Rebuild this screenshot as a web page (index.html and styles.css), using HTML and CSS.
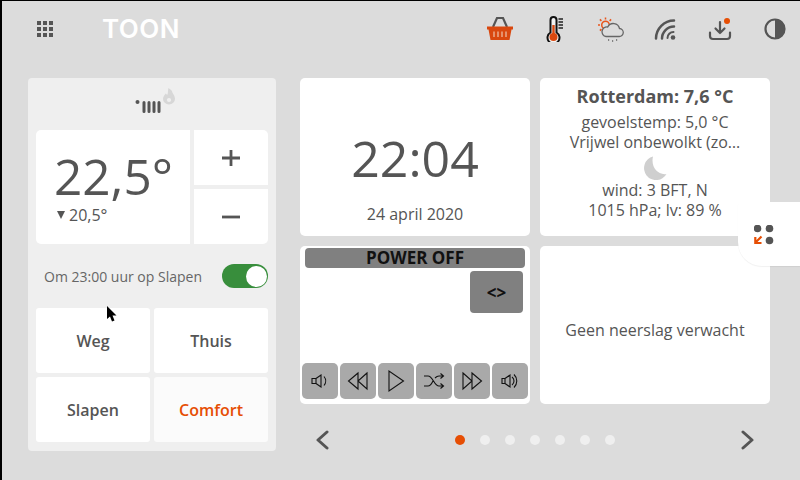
FILE: index.html
```html
<!DOCTYPE html>
<html lang="nl">
<head>
<meta charset="utf-8">
<title>Toon</title>
<link rel="stylesheet" href="styles.css">
</head>
<body>
<div class="screen">
  <header class="topbar">
    <svg class="apps" width="16" height="16" viewBox="0 0 16 16" fill="#555">
      <rect x="0" y="0" width="4" height="4"/><rect x="6" y="0" width="4" height="4"/><rect x="12" y="0" width="4" height="4"/>
      <rect x="0" y="6" width="4" height="4"/><rect x="6" y="6" width="4" height="4"/><rect x="12" y="6" width="4" height="4"/>
      <rect x="0" y="12" width="4" height="4"/><rect x="6" y="12" width="4" height="4"/><rect x="12" y="12" width="4" height="4"/>
    </svg>
    <div class="logo">TOON</div>
    <nav class="status">
      <span class="slot"><svg width="28" height="26" viewBox="0 0 28 26">
        <path d="M7 11 11 2H17L21 11" fill="none" stroke="#555" stroke-width="2.200"/>
        <path d="M1 10.500H27V13.500H25.500L23.500 24H4.500L2.500 13.500H1Z" fill="#d9480f"/>
        <path d="M8 15.500V21M12 15.500V21M16 15.500V21M20 15.500V21" stroke="#e9a98c" stroke-width="1.500"/>
      </svg></span>
      <span class="slot"><svg width="18" height="26" viewBox="0 0 18 26">
        <path d="M4.500 16.500V4a3 3 0 0 1 6 0V16.500a6 6 0 1 1-6 0Z" fill="#f2f2f2" stroke="#111" stroke-width="2"/>
        <circle cx="7.500" cy="21" r="4" fill="#d9480f"/><rect x="6.300" y="9" width="2.400" height="10" fill="#d9480f"/>
        <path d="M12.500 3H17M12.500 6H17M12.500 9H17M12.500 12H17" stroke="#222" stroke-width="1.600"/>
      </svg></span>
      <span class="slot"><svg width="28" height="26" viewBox="0 0 28 26" fill="none">
        <circle cx="9.500" cy="9" r="3.800" stroke="#e8551c" stroke-width="1.500"/>
        <path d="M9.500 1.500V3.500M2 9H4M3.900 3.400 5.400 4.900M15.100 3.400 13.600 4.900M3.900 14.600 5.400 13.100" stroke="#e8551c" stroke-width="1.500"/>
        <path d="M10 20.500H23a4 4 0 0 0 .5-8 6.300 6.300 0 0 0-11.800-1.500A4.800 4.800 0 0 0 10 20.500Z" fill="#dcdcdc" stroke="#666" stroke-width="1.300"/>
        <path d="M12 24h1.200M16 25h1.200M20 24h1.200" stroke="#666" stroke-width="1.300"/>
      </svg></span>
      <span class="slot"><svg width="22" height="22" viewBox="0 0 22 22" fill="none" stroke="#555" stroke-width="2.500" stroke-linecap="round">
        <path d="M2 20.500A18 18 0 0 1 20 2.500"/><path d="M8 20.500A12 12 0 0 1 20 8.500"/>
        <path d="M13.500 20A6 6 0 0 1 19.500 14" stroke-width="2"/>
        <circle cx="19" cy="19.500" r="2.300" fill="#555" stroke="none"/>
      </svg></span>
      <span class="slot"><svg width="24" height="24" viewBox="0 0 24 24" fill="none" stroke="#555" stroke-width="2.200" stroke-linecap="round" stroke-linejoin="round">
        <path d="M2 15.500V19a3 3 0 0 0 3 3H19a3 3 0 0 0 3-3V15.500"/><path d="M12 5V16M7.500 11.500 12 16 16.500 11.500"/>
        <circle cx="19" cy="4" r="3" fill="#e64e04" stroke="none"/>
      </svg></span>
      <span class="slot"><svg width="22" height="22" viewBox="0 0 22 22">
        <circle cx="11" cy="11" r="9.500" fill="none" stroke="#555" stroke-width="2.200"/>
        <path d="M11 1A10 10 0 0 1 11 21Z" fill="#555"/>
      </svg></span>
    </nav>
  </header>

  <main class="content">
    <section class="thermostat">
      <div class="burner">
        <svg width="42" height="30" viewBox="0 0 42 30">
          <circle cx="4.500" cy="16" r="2" fill="#555"/>
          <path d="M11 16.500V25.500M16 16.500V25.500M21 16.500V25.500M26 16.500V25.500" stroke="#555" stroke-width="3" stroke-linecap="round"/>
          <g transform="translate(-1.800,-5.200) scale(1.200,1.100)">
            <path d="M34 9.500C34.500 12 36.500 13 36.500 16.500A5 5 0 0 1 26.500 16.500C26.500 14 28 12.800 28.800 11.500L30 13C31 10.500 30.500 8.500 31 6.500 32 7.500 33.500 8 34 9.500Z" fill="#d7d7d7"/>
            <circle cx="31.500" cy="17.500" r="1.800" fill="#efefef"/>
          </g>
        </svg>
      </div>
      <div class="setpoint">
        <div class="temp-card">
          <div class="temp-main">22,5°</div>
          <div class="temp-sub"><span class="arrow"></span>20,5°</div>
        </div>
        <div class="steppers">
          <div class="stepper"><svg width="18" height="18" viewBox="0 0 18 18"><path d="M0 9H18M9 1V17" stroke="#555" stroke-width="2.800"/></svg></div>
          <div class="stepper"><svg width="18" height="18" viewBox="0 0 18 18"><path d="M0 9H18" stroke="#555" stroke-width="2.800"/></svg></div>
        </div>
      </div>
      <div class="schedule">
        <span class="schedule-text">Om 23:00 uur op Slapen</span>
        <span class="toggle"><span class="knob"></span></span>
      </div>
      <div class="modes">
        <div class="mode">Weg</div>
        <div class="mode">Thuis</div>
        <div class="mode">Slapen</div>
        <div class="mode active">Comfort</div>
      </div>
    </section>

    <section class="dashboard">
      <div class="tiles">
        <div class="tile clock">
          <div class="time">22:04</div>
          <div class="date">24 april 2020</div>
        </div>
        <div class="tile weather">
          <div class="city">Rotterdam: 7,6 °C</div>
          <div>gevoelstemp: 5,0 °C</div>
          <div>Vrijwel onbewolkt (zo…</div>
          <svg class="moon" width="24" height="24" viewBox="0 0 24 24"><path d="M10 .5A12 12 0 1 0 23.500 18C15 19.500 7.500 11 10 .5Z" fill="#cfcfcf"/></svg>
          <div>wind: 3 BFT, N</div>
          <div>1015 hPa; lv: 89 %</div>
        </div>
        <div class="tile media">
          <div class="power">POWER OFF</div>
          <div class="media-mid"><div class="swap">&lt;&gt;</div></div>
          <div class="transport">
            <div class="tbtn"><svg width="18" height="14" viewBox="0 0 18 14"><path d="M1 4.500H5V9.500H1ZM5 4.500 10 1V13L5 9.500M13 2.500A7 7 0 0 1 13 11.500"/></svg></div>
            <div class="tbtn"><svg width="22" height="20" viewBox="0 0 22 20"><path d="M11 2 1.500 10 11 18ZM20 2 11 10 20 18Z"/></svg></div>
            <div class="tbtn"><svg width="18" height="24" viewBox="0 0 18 24"><path d="M2 2V22L16.500 12Z"/></svg></div>
            <div class="tbtn"><svg width="22" height="16" viewBox="0 0 22 16"><path d="M1 3H5C10 3 11 13 16 13H20M1 13H5C7.500 13 8.800 10.500 10 8M12 5C13 4 14.500 3 16 3H20M17.500 .5 20.500 3 17.500 5.500M17.500 10.500 20.500 13 17.500 15.500"/></svg></div>
            <div class="tbtn"><svg width="22" height="20" viewBox="0 0 22 20"><path d="M2 2 11 10 2 18ZM11 2 20.500 10 11 18Z"/></svg></div>
            <div class="tbtn"><svg width="18" height="16" viewBox="0 0 18 16"><path d="M1 5.500H4V10.500H1ZM4 5.500 9 2V14L4 10.500M11 4A5 5 0 0 1 11 12M13 1.500A9 9 0 0 1 13 14.500"/></svg></div>
          </div>
        </div>
        <div class="tile rain">Geen neerslag verwacht</div>
      </div>
      <div class="pager">
        <svg width="14" height="20" viewBox="0 0 14 20"><path d="M12 2 3 10 12 18" fill="none" stroke="#555" stroke-width="3" stroke-linecap="round" stroke-linejoin="round"/></svg>
        <div class="dots">
          <span class="dot on"></span><span class="dot"></span><span class="dot"></span><span class="dot"></span><span class="dot"></span><span class="dot"></span><span class="dot"></span>
        </div>
        <svg width="14" height="20" viewBox="0 0 14 20"><path d="M2 2 11 10 2 18" fill="none" stroke="#555" stroke-width="3" stroke-linecap="round" stroke-linejoin="round"/></svg>
      </div>
    </section>
  </main>

  <aside class="sidetab">
    <svg width="24" height="24" viewBox="0 0 24 24">
      <circle cx="3.500" cy="3.500" r="3.800" fill="#555"/><circle cx="15.500" cy="3.500" r="3.800" fill="#555"/><circle cx="15.500" cy="15.500" r="3.800" fill="#555"/>
      <path d="M7.500 11.500 1.500 17.500M1.300 12V18H7.500" fill="none" stroke="#e64e04" stroke-width="2.200"/>
    </svg>
  </aside>

  <svg class="cursor" width="11" height="17" viewBox="0 0 11 17"><path d="M0 0V13L3 10.500 5 15.500 7.500 14.500 5.500 9.500H9.500Z" fill="#000"/></svg>
</div>
</body>
</html>
```
FILE: styles.css
```css
* { box-sizing: border-box; }
html, body { margin: 0; padding: 0; }
body { width: 800px; height: 480px; overflow: hidden; background: #000; font-family: "Open Sans", sans-serif; color: #555; }
.screen { position: relative; width: 800px; height: 480px; background: #dcdcdc; border-left: 2px solid #000; border-top: 1px solid #000; overflow: hidden; }

.topbar { display: flex; align-items: center; height: 57px; padding-left: 35px; padding-bottom: 1px; }
.logo { margin-left: 49px; margin-top: -1px; font-family: Inter, sans-serif; font-weight: 600; font-size: 26px; line-height: 1; letter-spacing: 0.5px; color: #fff; }
.status { display: flex; gap: 15px; margin-left: auto; margin-right: 5px; }
.slot { display: flex; align-items: center; justify-content: center; width: 40px; height: 28px; }

.content { display: flex; gap: 24px; padding: 20px 0 0 26px; }

.thermostat { width: 248px; height: 373px; padding: 0 8px; background: #efefef; border-radius: 4px; }
.burner { display: flex; justify-content: center; height: 52px; padding: 8px 0 0 4px; }
.setpoint { display: flex; gap: 4px; height: 114px; }
.temp-card { width: 154px; padding: 17px 0 0 18px; background: #fff; border-radius: 5px 0 0 5px; }
.temp-main { font-size: 49.500px; line-height: 58px; }
.temp-sub { display: flex; align-items: center; font-size: 16px; line-height: 20px; margin-left: 3px; }
.arrow { width: 0; height: 0; margin-right: 4px; border-left: 4.500px solid transparent; border-right: 4.500px solid transparent; border-top: 8px solid #555; }
.steppers { display: flex; flex-direction: column; gap: 4px; width: 74px; }
.stepper { display: flex; align-items: center; justify-content: center; flex: 1; background: #fff; }
.stepper:first-child { border-top-right-radius: 5px; }
.stepper:last-child { border-bottom-right-radius: 5px; }

.schedule { display: flex; align-items: center; justify-content: space-between; height: 64px; padding-left: 8px; }
.schedule-text { font-size: 14px; color: #666; }
.toggle { display: flex; align-items: center; justify-content: flex-end; width: 46px; height: 24px; padding-right: 1px; border-radius: 12px; background: #388e3c; }
.knob { width: 21px; height: 21px; border-radius: 50%; background: #fff; }

.modes { display: grid; grid-template-columns: 114px 114px; grid-template-rows: 65px 65px; gap: 4px; }
.mode { display: flex; align-items: center; justify-content: center; background: #fff; border-radius: 3px; font-size: 16px; font-weight: 600; }
.mode.active { background: #fbfbfb; color: #e64e04; }

.tiles { display: grid; grid-template-columns: 230px 230px; grid-template-rows: 158px 158px; gap: 10px; }
.tile { background: #fff; border-radius: 5px; }
.clock { display: flex; flex-direction: column; align-items: center; padding-top: 42px; }
.time { font-size: 50px; line-height: 76px; }
.date { margin-top: 8px; font-size: 16px; line-height: 20px; }
.weather { display: flex; flex-direction: column; align-items: center; padding-top: 7px; font-size: 16px; line-height: 20px; }
.city { margin-bottom: 4px; font-size: 18px; font-weight: 700; line-height: 23px; }
.moon { display: block; margin-top: 4px; }

.media { display: flex; flex-direction: column; padding: 2px 2px 5px; }
.power { margin: 0 3px; height: 20px; background: #808080; border-radius: 4px; color: #111; font-size: 17px; font-weight: 700; line-height: 20px; text-align: center; }
.media-mid { flex: 1; display: flex; justify-content: flex-end; padding: 3px 5px 0 0; }
.swap { display: flex; align-items: center; justify-content: center; width: 53px; height: 42px; background: #808080; border-radius: 4px; color: #111; font-size: 17px; font-weight: 700; }
.transport { display: flex; gap: 2px; }
.tbtn { display: flex; align-items: center; justify-content: center; width: 36px; height: 36px; background: #a9a9a9; border-radius: 5px; }
.tbtn svg { fill: none; stroke: #111; stroke-width: 1.100; }

.rain { display: flex; align-items: center; justify-content: center; padding-top: 10px; font-size: 16px; }

.pager { display: flex; align-items: center; justify-content: space-between; height: 44px; margin-top: 14px; padding: 0 15px; }
.dots { display: flex; gap: 15px; }
.dot { width: 10px; height: 10px; border-radius: 50%; background: #efefef; }
.dot.on { background: #e64e04; }

.sidetab { position: absolute; top: 201px; right: 0; display: flex; width: 62px; height: 64px; padding: 23px 0 0 16px; background: #fff; border-radius: 4px 0 0 24px; box-shadow: 0 1px 1px rgba(0,0,0,.06); }
.cursor { position: absolute; left: 105px; top: 305px; }
```
